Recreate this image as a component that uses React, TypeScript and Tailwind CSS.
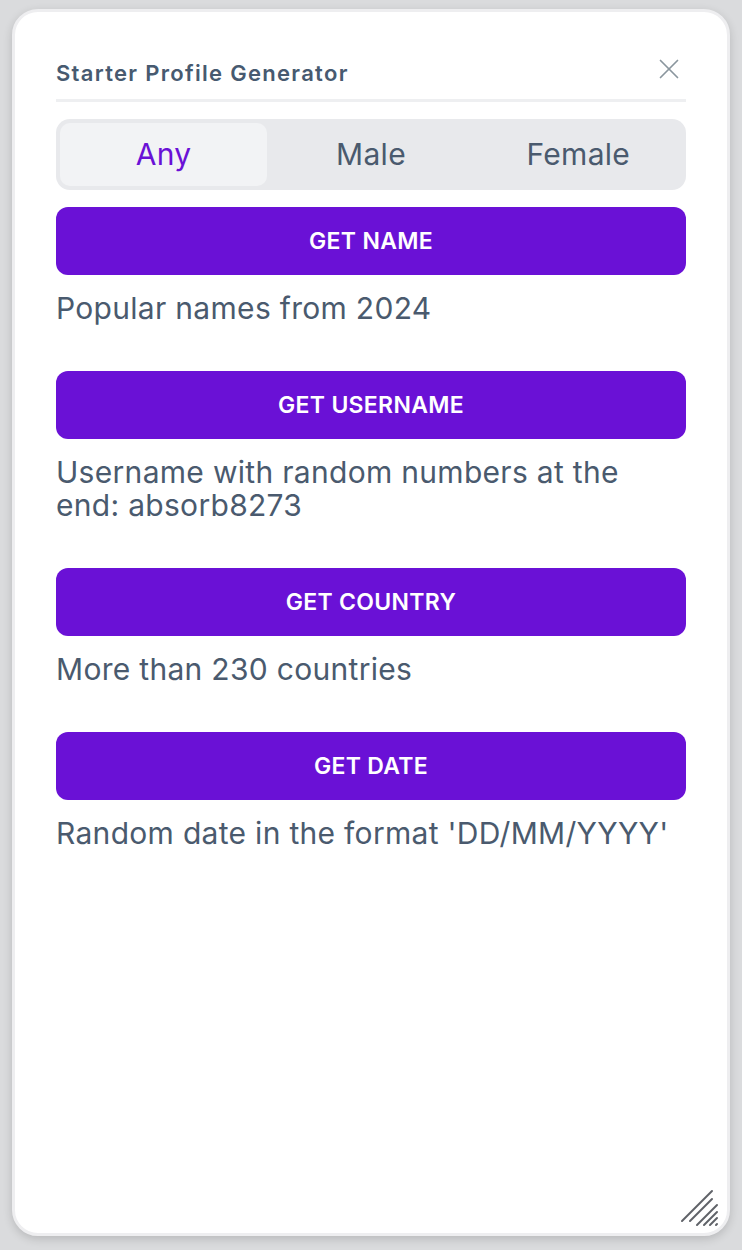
import { X } from "lucide-react";

const sections = [
  { label: "GET NAME", desc: "Popular names from 2024" },
  { label: "GET USERNAME", desc: "Username with random numbers at the end: absorb8273" },
  { label: "GET COUNTRY", desc: "More than 230 countries" },
  { label: "GET DATE", desc: "Random date in the format 'DD/MM/YYYY'" },
];

const tabs = ["Any", "Male", "Female"];

function ResizeHandle() {
  return (
    <svg width="44" height="44" viewBox="0 0 44 44" className="absolute right-[4px] bottom-[4px]">
      <g stroke="#5f6268" strokeWidth="2" strokeLinecap="round">
        <line x1="3" y1="36" x2="33" y2="6" />
        <line x1="11" y1="36" x2="33" y2="14" />
        <line x1="18" y1="40" x2="38" y2="20" />
        <line x1="25" y1="40" x2="38" y2="27" />
        <line x1="31" y1="40" x2="38" y2="33" />
        <line x1="37" y1="40" x2="38" y2="39" />
      </g>
    </svg>
  );
}

export default function App() {
  return (
    <div className="w-full h-[1250px] bg-[#dadbdd] pt-[9px] pb-[14px] px-[12px] font-['Inter',sans-serif]">
      <div className="relative h-full rounded-[26px] border-[3px] border-[#eeeef0] bg-white shadow-[0_3px_10px_rgba(0,0,0,0.16)] px-[41px] pt-[46px]">
        {/* Header */}
        <div className="flex h-[30px] items-center justify-between">
          <h1 className="text-[22px] font-semibold text-[#475a70] tracking-[1.3px]">Starter Profile Generator</h1>
          <X className="h-[34px] w-[34px] -mt-[8px] text-[#8a969e]" strokeWidth={1.2} />
        </div>
        <div className="mt-[11px] h-[3px] bg-[#eeeff1]" />

        {/* Gender tabs */}
        <div className="mt-[17px] grid h-[71px] grid-cols-3 rounded-[14px] bg-[#e8e9ec] p-[4px]">
          {tabs.map((tab, i) => (
            <div
              key={tab}
              className={`flex items-center justify-center rounded-[10px] text-[30px] tracking-[0.3px] ${
                i === 0 ? "bg-[#f2f3f5] text-[#6a11d6]" : "text-[#4a5a6e]"
              }`}
            >
              {tab}
            </div>
          ))}
        </div>

        {/* Actions */}
        <div className="mt-[17px] flex flex-col gap-[46px]">
          {sections.map((s) => (
            <div key={s.label}>
              <button className="flex h-[68px] w-full items-center justify-center rounded-[12px] bg-[#6a11d6] text-[23px] font-semibold tracking-[0.3px] text-white">
                {s.label}
              </button>
              <p className="mt-[17px] text-[30px] leading-[33px] tracking-[0.3px] text-[#4a5a6e]">{s.desc}</p>
            </div>
          ))}
        </div>

        <ResizeHandle />
      </div>
    </div>
  );
}
